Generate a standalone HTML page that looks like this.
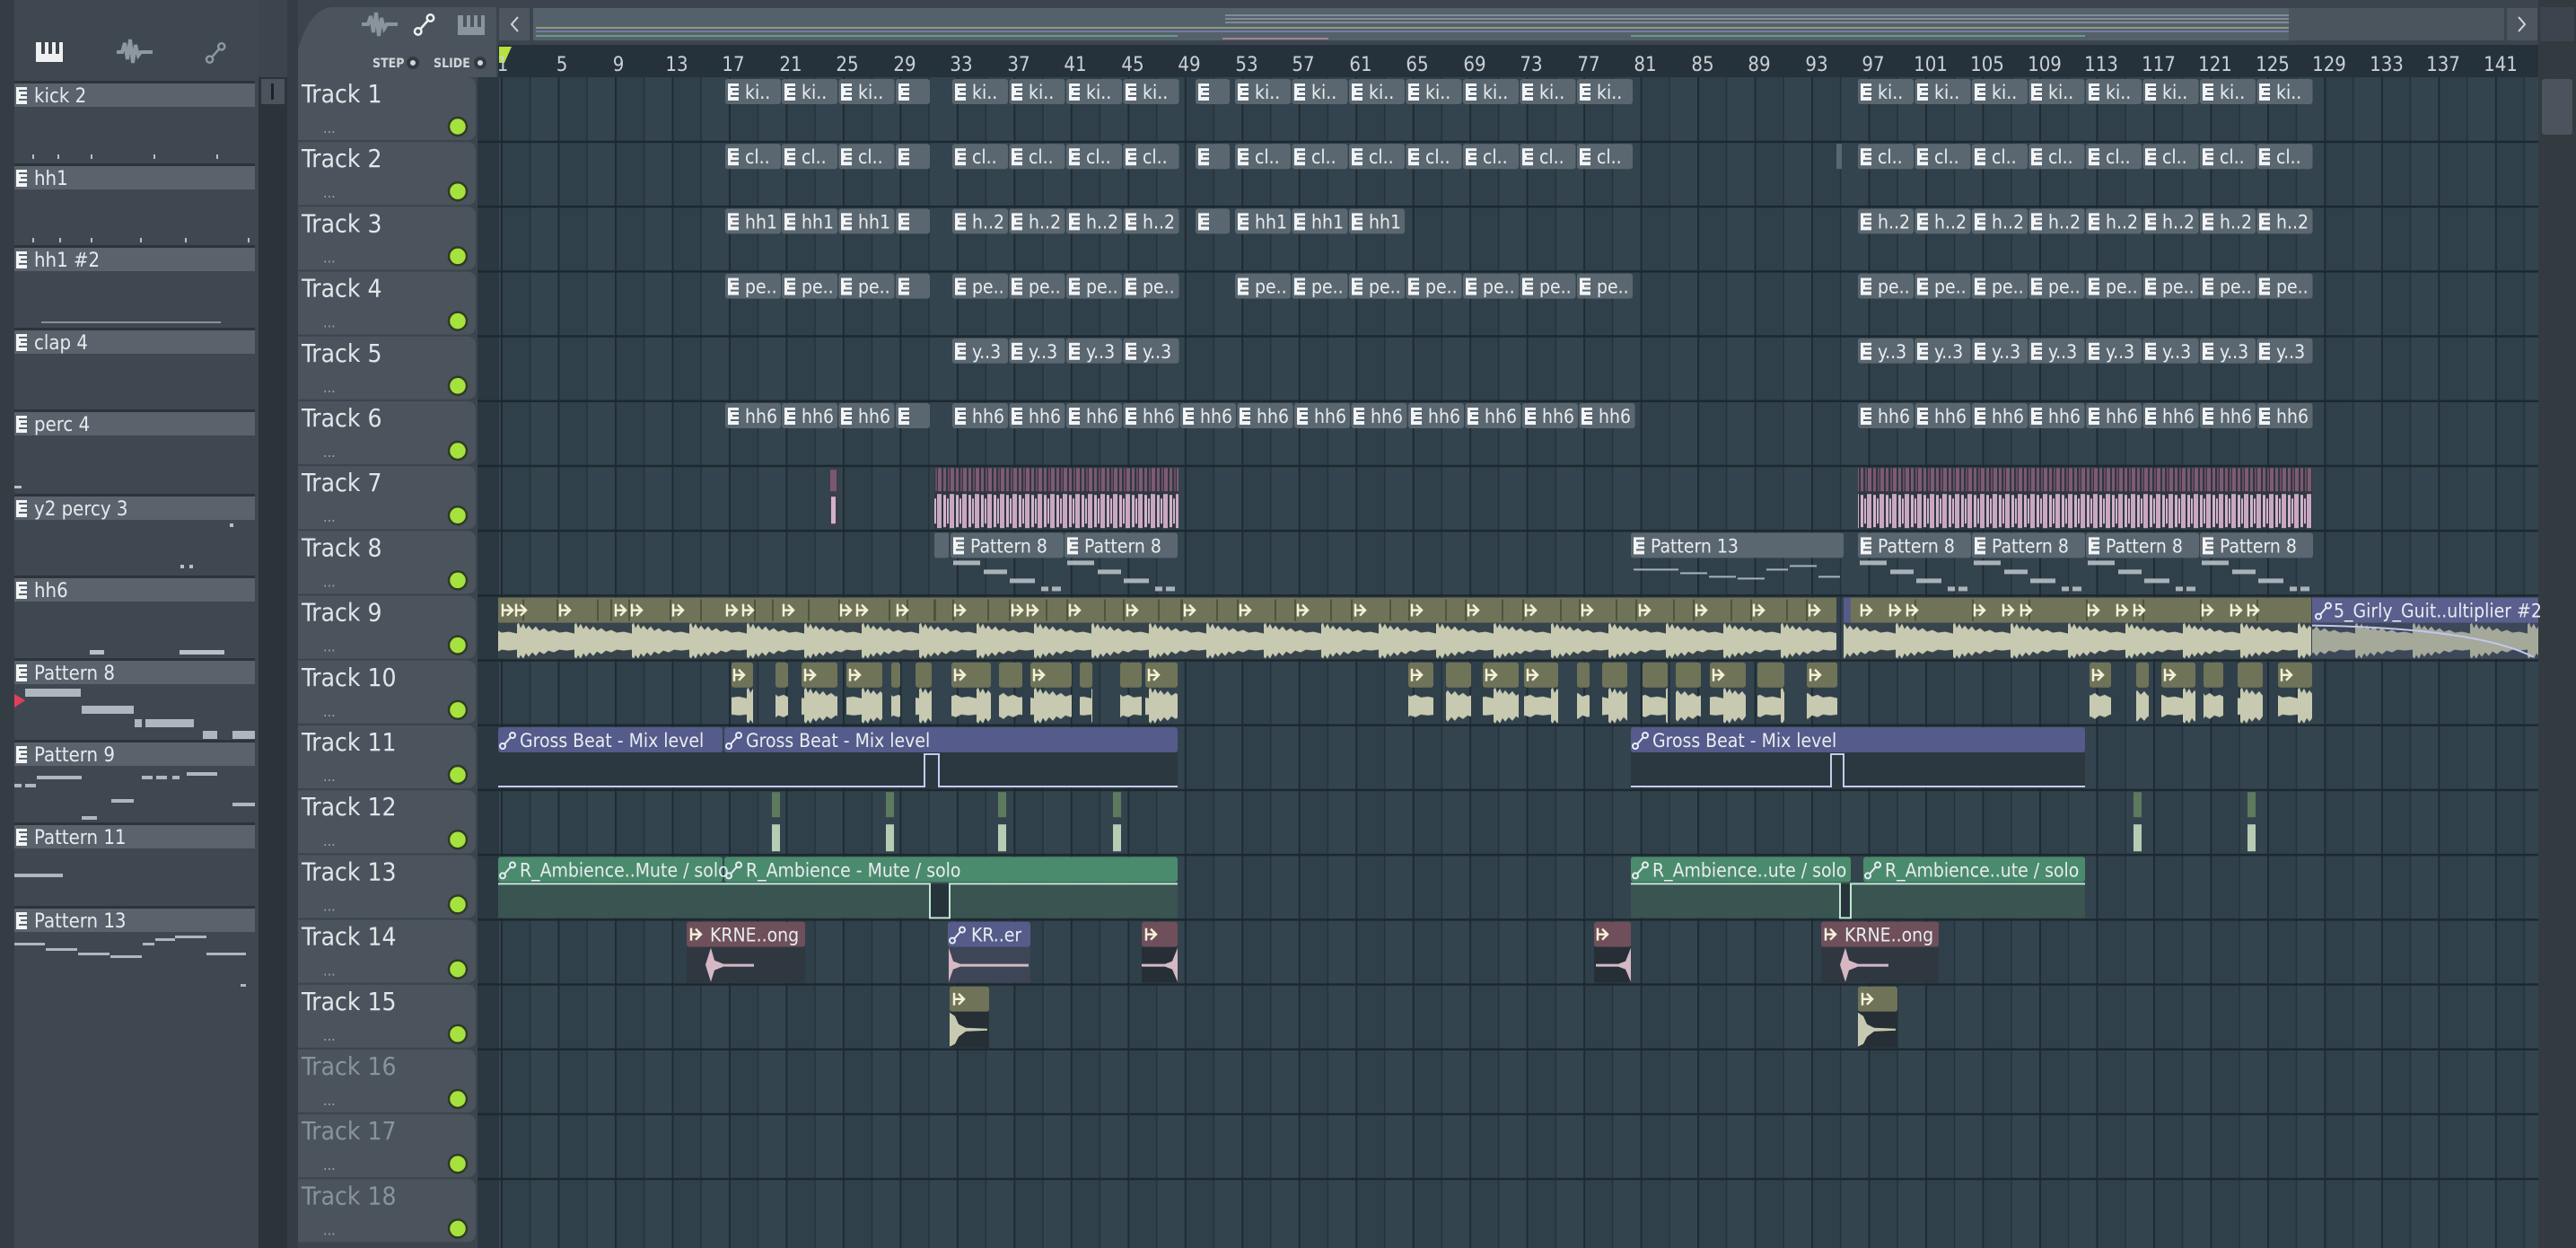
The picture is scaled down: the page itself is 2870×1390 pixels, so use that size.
<!DOCTYPE html>
<html><head><meta charset="utf-8"><style>
html,body{margin:0;padding:0;background:#3c454d;overflow:hidden}
svg{display:block}
text{font-family:"Liberation Sans Narrow","DejaVu Sans Condensed","Liberation Sans",sans-serif}
</style></head><body>
<svg width="2870" height="1390" viewBox="0 0 2870 1390" xmlns="http://www.w3.org/2000/svg">
<defs>
<pattern id="grid" x="558" y="0" width="63.48" height="1390" patternUnits="userSpaceOnUse">
<rect width="31.74" height="1390" fill="#30404a"/><rect x="31.74" width="31.74" height="1390" fill="#34444e"/>
<rect width="2" height="1390" fill="#1f2b33"/><rect x="31.74" width="1.5" height="1390" fill="#243139"/>
</pattern>
<pattern id="wave" x="0" y="30" width="64" height="40" patternUnits="userSpaceOnUse">
<path d="M0,20 L0,2 L2,0 L4,6 L7,1 L10,7 L13,3 L17,8 L21,4 L25,9 L30,6 L35,10 L41,8 L47,11 L55,10 L64,12 L64,30 L55,31 L47,30 L41,33 L35,31 L30,35 L25,32 L21,37 L17,33 L13,38 L10,34 L7,40 L4,36 L2,40 L0,38 Z" fill="#c7cab0"/>
</pattern>
<pattern id="pwave" x="0" y="30" width="14" height="40" patternUnits="userSpaceOnUse">
<rect x="1" y="2" width="3" height="36" fill="#d2b2cb"/><rect x="5" y="6" width="2" height="28" fill="#d2b2cb"/><rect x="8" y="1" width="5" height="38" fill="#c9a7c2"/>
</pattern>
<pattern id="phead" x="0" y="0" width="14" height="30" patternUnits="userSpaceOnUse">
<rect x="1" y="2" width="3" height="26" fill="#7a5870"/><rect x="6" y="2" width="2" height="26" fill="#6a4c62"/><rect x="9" y="2" width="4" height="26" fill="#7e5a74"/>
</pattern>
<g id="pic"><rect width="12" height="19" fill="#f2f4f6"/><rect x="3" y="3" width="9" height="2" fill="#5a656e"/><rect x="5" y="8" width="7" height="2" fill="#5a656e"/><rect x="3" y="13" width="9" height="2" fill="#5a656e"/></g>
<g id="aic"><path d="M0,3 L0,17 M0,10 L11,10 M5,4 L11,10 L5,16" stroke="#f5f0d8" stroke-width="2.5" fill="none"/></g>
<g id="lic"><circle cx="3" cy="16" r="3" fill="none" stroke="#e8ecf6" stroke-width="2"/><circle cx="14" cy="4" r="3" fill="none" stroke="#e8ecf6" stroke-width="2"/><path d="M5,14 L12,6" stroke="#e8ecf6" stroke-width="2"/></g>
</defs>

<rect width="2870" height="1390" fill="#3c454d"/>

<!-- left picker -->
<rect x="0" y="0" width="16" height="1390" fill="#353d44"/>
<rect x="16" y="0" width="272" height="1390" fill="#3f4850"/>
<rect x="288" y="86" width="32" height="1304" fill="#2c343a"/>
<rect x="291" y="88" width="26" height="28" fill="#4b545c"/><rect x="302" y="93" width="3" height="18" fill="#1c2227"/>
<rect x="320" y="0" width="12" height="1390" fill="#353d44"/>
<g transform="translate(40,47)"><rect width="30" height="22" fill="#eef0f2"/><rect x="6" width="4" height="13" fill="#3c454d"/><rect x="14" width="4" height="13" fill="#3c454d"/><rect x="22" width="4" height="13" fill="#3c454d"/></g>
<path d="M130,58 L136,58 L139,48 L142,66 L145,44 L148,70 L151,50 L154,62 L157,58 L170,58" stroke="#8e989f" stroke-width="4" fill="none"/>
<g transform="translate(230,47) scale(1.2)"><circle cx="3" cy="16" r="3" fill="none" stroke="#8e989f" stroke-width="2"/><circle cx="14" cy="4" r="3" fill="none" stroke="#8e989f" stroke-width="2"/><path d="M5,14 L12,6" stroke="#8e989f" stroke-width="2"/></g>
<g font-size="22" fill="#e6eaed">
<g transform="translate(16,93)"><rect width="268" height="26" fill="#5a636b"/><rect x="0" y="-3" width="268" height="3" fill="#2c343a"/><use href="#pic" x="2" y="4"/><text x="22" y="21">kick 2</text><g fill="#b8c0c6"><rect x="20" y="79" width="2" height="5"/><rect x="48" y="79" width="2" height="5"/><rect x="85" y="79" width="2" height="5"/><rect x="155" y="79" width="2" height="5"/><rect x="225" y="79" width="2" height="5"/></g></g>
<g transform="translate(16,185)"><rect width="268" height="26" fill="#5a636b"/><rect x="0" y="-3" width="268" height="3" fill="#2c343a"/><use href="#pic" x="2" y="4"/><text x="22" y="21">hh1</text><g fill="#b8c0c6"><rect x="20" y="80" width="2" height="5"/><rect x="50" y="80" width="2" height="5"/><rect x="85" y="80" width="2" height="5"/><rect x="140" y="80" width="2" height="5"/><rect x="190" y="80" width="2" height="5"/><rect x="260" y="80" width="2" height="5"/></g></g>
<g transform="translate(16,276)"><rect width="268" height="26" fill="#5a636b"/><rect x="0" y="-3" width="268" height="3" fill="#2c343a"/><use href="#pic" x="2" y="4"/><text x="22" y="21">hh1 #2</text><g fill="#b8c0c6"><rect x="30" y="82" width="200" height="2" opacity=".6"/></g></g>
<g transform="translate(16,368)"><rect width="268" height="26" fill="#5a636b"/><rect x="0" y="-3" width="268" height="3" fill="#2c343a"/><use href="#pic" x="2" y="4"/><text x="22" y="21">clap 4</text></g>
<g transform="translate(16,459)"><rect width="268" height="26" fill="#5a636b"/><rect x="0" y="-3" width="268" height="3" fill="#2c343a"/><use href="#pic" x="2" y="4"/><text x="22" y="21">perc 4</text><rect x="0" y="82" width="8" height="3" fill="#b8c0c6"/></g>
<g transform="translate(16,553)"><rect width="268" height="26" fill="#5a636b"/><rect x="0" y="-3" width="268" height="3" fill="#2c343a"/><use href="#pic" x="2" y="4"/><text x="22" y="21">y2 percy 3</text><rect x="240" y="30" width="4" height="4" fill="#b8c0c6"/><rect x="185" y="76" width="4" height="4" fill="#b8c0c6"/><rect x="195" y="76" width="4" height="4" fill="#b8c0c6"/></g>
<g transform="translate(16,644)"><rect width="268" height="26" fill="#5a636b"/><rect x="0" y="-3" width="268" height="3" fill="#2c343a"/><use href="#pic" x="2" y="4"/><text x="22" y="21">hh6</text><g fill="#b8c0c6"><rect x="84" y="80" width="16" height="5"/><rect x="184" y="80" width="50" height="5"/></g></g>
<g transform="translate(16,736)"><rect width="268" height="26" fill="#5a636b"/><rect x="0" y="-3" width="268" height="3" fill="#2c343a"/><use href="#pic" x="2" y="4"/><text x="22" y="21">Pattern 8</text><g fill="#aeb7be"><rect x="12" y="31" width="62" height="9"/><rect x="75" y="50" width="58" height="9"/><rect x="134" y="65" width="8" height="9"/><rect x="146" y="65" width="54" height="9"/><rect x="210" y="78" width="16" height="9"/><rect x="243" y="78" width="25" height="9"/></g><path d="M0,37 L12,44 L0,52 Z" fill="#e0405c"/></g>
<g transform="translate(16,827)"><rect width="268" height="26" fill="#5a636b"/><rect x="0" y="-3" width="268" height="3" fill="#2c343a"/><use href="#pic" x="2" y="4"/><text x="22" y="21">Pattern 9</text><g fill="#aeb7be"><rect x="25" y="37" width="50" height="4"/><rect x="0" y="46" width="8" height="4"/><rect x="12" y="46" width="12" height="4"/><rect x="142" y="37" width="12" height="4"/><rect x="158" y="37" width="12" height="4"/><rect x="176" y="37" width="8" height="4"/><rect x="192" y="33" width="34" height="4"/><rect x="108" y="63" width="25" height="4"/><rect x="243" y="67" width="25" height="4"/><rect x="75" y="82" width="17" height="4"/></g></g>
<g transform="translate(16,919)"><rect width="268" height="26" fill="#5a636b"/><rect x="0" y="-3" width="268" height="3" fill="#2c343a"/><use href="#pic" x="2" y="4"/><text x="22" y="21">Pattern 11</text><rect x="0" y="54" width="54" height="4" fill="#aeb7be"/></g>
<g transform="translate(16,1012)"><rect width="268" height="26" fill="#5a636b"/><rect x="0" y="-3" width="268" height="3" fill="#2c343a"/><use href="#pic" x="2" y="4"/><text x="22" y="21">Pattern 13</text><g fill="#aeb7be"><rect x="0" y="38" width="34" height="3"/><rect x="35" y="44" width="35" height="3"/><rect x="71" y="49" width="35" height="3"/><rect x="107" y="52" width="35" height="3"/><rect x="143" y="38" width="13" height="3"/><rect x="157" y="33" width="22" height="3"/><rect x="179" y="30" width="35" height="3"/><rect x="214" y="49" width="44" height="3"/><rect x="252" y="84" width="6" height="3"/></g></g>
</g>

<!-- header tab -->
<path d="M332,86 L332,55 Q345,10 370,8 L553,8 L553,86 Z" fill="#4b545c"/>
<path d="M403,27 L410,27 L413,18 L416,36 L419,14 L422,40 L425,20 L428,32 L431,27 L443,27" stroke="#8a949b" stroke-width="4" fill="none"/>
<g transform="translate(462,15) scale(1.25)"><circle cx="3" cy="16" r="3" fill="none" stroke="#eef0f2" stroke-width="2"/><circle cx="14" cy="4" r="3" fill="none" stroke="#eef0f2" stroke-width="2"/><path d="M5,14 L12,6" stroke="#eef0f2" stroke-width="2"/></g>
<g transform="translate(510,17)"><rect width="30" height="22" fill="#8a949b"/><rect x="6" width="4" height="13" fill="#4b545c"/><rect x="14" width="4" height="13" fill="#4b545c"/><rect x="22" width="4" height="13" fill="#4b545c"/></g>
<text x="415" y="75" font-size="14" fill="#d0d6da" font-weight="bold">STEP</text>
<circle cx="460" cy="70" r="7" fill="#33393f"/><circle cx="460" cy="70" r="3" fill="#d0d6da"/>
<text x="483" y="75" font-size="14" fill="#d0d6da" font-weight="bold">SLIDE</text>
<circle cx="535" cy="70" r="7" fill="#33393f"/><circle cx="535" cy="70" r="3" fill="#d0d6da"/>

<!-- overview -->
<rect x="553" y="8" width="2317" height="42" fill="#3c454d"/>
<rect x="556" y="9" width="34" height="36" fill="#4d565e"/><path d="M577,19 L570,27 L577,35" stroke="#d0d6da" stroke-width="2" fill="none"/>
<rect x="594" y="9" width="1956" height="36" fill="#55616a"/>
<g stroke-width="1.5"><path d="M1365,17 H2550 M1365,21 H2550 M1365,25 H2550" stroke="#8e99a1"/><path d="M597,31 H2550" stroke="#a7aa82"/><path d="M597,35 H2550" stroke="#7d82c0"/><path d="M597,40 H1312 M1817,40 H2323" stroke="#6fb08e"/><path d="M1362,43 H1480" stroke="#c0889c"/></g>
<rect x="2550" y="9" width="240" height="36" fill="#4a555d"/>
<rect x="2793" y="9" width="34" height="36" fill="#4d565e"/><path d="M2806,19 L2813,27 L2806,35" stroke="#d0d6da" stroke-width="2" fill="none"/>

<!-- ruler -->
<rect x="555" y="50" width="2273" height="36" fill="#26323b"/>
<path d="M556,52 L570,52 L562,70 L556,70 Z" fill="#b6e23c"/>
<g font-size="22" fill="#c9d0d5" text-anchor="middle">
<text x="560" y="79">1</text><text x="626" y="79">5</text><text x="689" y="79">9</text><text x="754" y="79">13</text><text x="817" y="79">17</text><text x="881" y="79">21</text><text x="944" y="79">25</text><text x="1008" y="79">29</text><text x="1071" y="79">33</text><text x="1135" y="79">37</text><text x="1198" y="79">41</text><text x="1262" y="79">45</text><text x="1325" y="79">49</text><text x="1389" y="79">53</text><text x="1452" y="79">57</text><text x="1516" y="79">61</text><text x="1579" y="79">65</text><text x="1643" y="79">69</text><text x="1706" y="79">73</text><text x="1770" y="79">77</text><text x="1833" y="79">81</text><text x="1897" y="79">85</text><text x="1960" y="79">89</text><text x="2024" y="79">93</text><text x="2087" y="79">97</text><text x="2151" y="79">101</text><text x="2214" y="79">105</text><text x="2278" y="79">109</text><text x="2341" y="79">113</text><text x="2405" y="79">117</text><text x="2468" y="79">121</text><text x="2532" y="79">125</text><text x="2595" y="79">129</text><text x="2659" y="79">133</text><text x="2722" y="79">137</text><text x="2786" y="79">141</text>
</g>

<!-- grid -->
<rect x="532" y="86" width="2296" height="1304" fill="url(#grid)"/>
<rect x="532" y="86" width="24" height="1304" fill="#2b3841"/>
<g fill="#1d282f">
<rect x="532" y="156.7" width="2296" height="2.5"/><rect x="532" y="228.9" width="2296" height="2.5"/><rect x="532" y="301.1" width="2296" height="2.5"/><rect x="532" y="373.3" width="2296" height="2.5"/><rect x="532" y="445.5" width="2296" height="2.5"/><rect x="532" y="517.7" width="2296" height="2.5"/><rect x="532" y="589.9" width="2296" height="2.5"/><rect x="532" y="662.1" width="2296" height="2.5"/><rect x="532" y="734.3" width="2296" height="2.5"/><rect x="532" y="806.5" width="2296" height="2.5"/><rect x="532" y="878.7" width="2296" height="2.5"/><rect x="532" y="950.9" width="2296" height="2.5"/><rect x="532" y="1023.1" width="2296" height="2.5"/><rect x="532" y="1095.3" width="2296" height="2.5"/><rect x="532" y="1167.5" width="2296" height="2.5"/><rect x="532" y="1239.7" width="2296" height="2.5"/><rect x="532" y="1311.9" width="2296" height="2.5"/>
</g>

<rect x="2828" y="0" width="42" height="1390" fill="#333b41"/>
<rect x="2832" y="88" width="34" height="62" rx="3" fill="#4b545c"/>
<rect x="2830" y="8" width="38" height="38" fill="#3c454d"/>

<!-- track headers -->
<g font-size="28" fill="#e2e6e9">
<g transform="translate(332,86)"><path d="M0,0 H188 Q198,0 198,10 V60 Q198,70 188,70 H0 Z" fill="#4b545c"/><text x="4" y="28">Track 1</text><text x="28" y="62" font-size="16" fill="#9aa3a9">...</text><circle cx="178" cy="55" r="10" fill="#a6e23e" stroke="#2f3a26" stroke-width="2.5"/></g>
<g transform="translate(332,158.2)"><path d="M0,0 H188 Q198,0 198,10 V60 Q198,70 188,70 H0 Z" fill="#4b545c"/><text x="4" y="28">Track 2</text><text x="28" y="62" font-size="16" fill="#9aa3a9">...</text><circle cx="178" cy="55" r="10" fill="#a6e23e" stroke="#2f3a26" stroke-width="2.5"/></g>
<g transform="translate(332,230.4)"><path d="M0,0 H188 Q198,0 198,10 V60 Q198,70 188,70 H0 Z" fill="#4b545c"/><text x="4" y="28">Track 3</text><text x="28" y="62" font-size="16" fill="#9aa3a9">...</text><circle cx="178" cy="55" r="10" fill="#a6e23e" stroke="#2f3a26" stroke-width="2.5"/></g>
<g transform="translate(332,302.6)"><path d="M0,0 H188 Q198,0 198,10 V60 Q198,70 188,70 H0 Z" fill="#4b545c"/><text x="4" y="28">Track 4</text><text x="28" y="62" font-size="16" fill="#9aa3a9">...</text><circle cx="178" cy="55" r="10" fill="#a6e23e" stroke="#2f3a26" stroke-width="2.5"/></g>
<g transform="translate(332,374.8)"><path d="M0,0 H188 Q198,0 198,10 V60 Q198,70 188,70 H0 Z" fill="#4b545c"/><text x="4" y="28">Track 5</text><text x="28" y="62" font-size="16" fill="#9aa3a9">...</text><circle cx="178" cy="55" r="10" fill="#a6e23e" stroke="#2f3a26" stroke-width="2.5"/></g>
<g transform="translate(332,447)"><path d="M0,0 H188 Q198,0 198,10 V60 Q198,70 188,70 H0 Z" fill="#4b545c"/><text x="4" y="28">Track 6</text><text x="28" y="62" font-size="16" fill="#9aa3a9">...</text><circle cx="178" cy="55" r="10" fill="#a6e23e" stroke="#2f3a26" stroke-width="2.5"/></g>
<g transform="translate(332,519.2)"><path d="M0,0 H188 Q198,0 198,10 V60 Q198,70 188,70 H0 Z" fill="#4b545c"/><text x="4" y="28">Track 7</text><text x="28" y="62" font-size="16" fill="#9aa3a9">...</text><circle cx="178" cy="55" r="10" fill="#a6e23e" stroke="#2f3a26" stroke-width="2.5"/></g>
<g transform="translate(332,591.4)"><path d="M0,0 H188 Q198,0 198,10 V60 Q198,70 188,70 H0 Z" fill="#4b545c"/><text x="4" y="28">Track 8</text><text x="28" y="62" font-size="16" fill="#9aa3a9">...</text><circle cx="178" cy="55" r="10" fill="#a6e23e" stroke="#2f3a26" stroke-width="2.5"/></g>
<g transform="translate(332,663.6)"><path d="M0,0 H188 Q198,0 198,10 V60 Q198,70 188,70 H0 Z" fill="#4b545c"/><text x="4" y="28">Track 9</text><text x="28" y="62" font-size="16" fill="#9aa3a9">...</text><circle cx="178" cy="55" r="10" fill="#a6e23e" stroke="#2f3a26" stroke-width="2.5"/></g>
<g transform="translate(332,735.8)"><path d="M0,0 H188 Q198,0 198,10 V60 Q198,70 188,70 H0 Z" fill="#4b545c"/><text x="4" y="28">Track 10</text><text x="28" y="62" font-size="16" fill="#9aa3a9">...</text><circle cx="178" cy="55" r="10" fill="#a6e23e" stroke="#2f3a26" stroke-width="2.5"/></g>
<g transform="translate(332,808)"><path d="M0,0 H188 Q198,0 198,10 V60 Q198,70 188,70 H0 Z" fill="#4b545c"/><text x="4" y="28">Track 11</text><text x="28" y="62" font-size="16" fill="#9aa3a9">...</text><circle cx="178" cy="55" r="10" fill="#a6e23e" stroke="#2f3a26" stroke-width="2.5"/></g>
<g transform="translate(332,880.2)"><path d="M0,0 H188 Q198,0 198,10 V60 Q198,70 188,70 H0 Z" fill="#4b545c"/><text x="4" y="28">Track 12</text><text x="28" y="62" font-size="16" fill="#9aa3a9">...</text><circle cx="178" cy="55" r="10" fill="#a6e23e" stroke="#2f3a26" stroke-width="2.5"/></g>
<g transform="translate(332,952.4)"><path d="M0,0 H188 Q198,0 198,10 V60 Q198,70 188,70 H0 Z" fill="#4b545c"/><text x="4" y="28">Track 13</text><text x="28" y="62" font-size="16" fill="#9aa3a9">...</text><circle cx="178" cy="55" r="10" fill="#a6e23e" stroke="#2f3a26" stroke-width="2.5"/></g>
<g transform="translate(332,1024.6)"><path d="M0,0 H188 Q198,0 198,10 V60 Q198,70 188,70 H0 Z" fill="#4b545c"/><text x="4" y="28">Track 14</text><text x="28" y="62" font-size="16" fill="#9aa3a9">...</text><circle cx="178" cy="55" r="10" fill="#a6e23e" stroke="#2f3a26" stroke-width="2.5"/></g>
<g transform="translate(332,1096.8)"><path d="M0,0 H188 Q198,0 198,10 V60 Q198,70 188,70 H0 Z" fill="#4b545c"/><text x="4" y="28">Track 15</text><text x="28" y="62" font-size="16" fill="#9aa3a9">...</text><circle cx="178" cy="55" r="10" fill="#a6e23e" stroke="#2f3a26" stroke-width="2.5"/></g>
<g transform="translate(332,1169)"><path d="M0,0 H188 Q198,0 198,10 V60 Q198,70 188,70 H0 Z" fill="#4b545c"/><text x="4" y="28" fill="#89939a">Track 16</text><text x="28" y="62" font-size="16" fill="#9aa3a9">...</text><circle cx="178" cy="55" r="10" fill="#a6e23e" stroke="#2f3a26" stroke-width="2.5"/></g>
<g transform="translate(332,1241.2)"><path d="M0,0 H188 Q198,0 198,10 V60 Q198,70 188,70 H0 Z" fill="#4b545c"/><text x="4" y="28" fill="#89939a">Track 17</text><text x="28" y="62" font-size="16" fill="#9aa3a9">...</text><circle cx="178" cy="55" r="10" fill="#a6e23e" stroke="#2f3a26" stroke-width="2.5"/></g>
<g transform="translate(332,1313.4)"><path d="M0,0 H188 Q198,0 198,10 V60 Q198,70 188,70 H0 Z" fill="#4b545c"/><text x="4" y="28" fill="#89939a">Track 18</text><text x="28" y="62" font-size="16" fill="#9aa3a9">...</text><circle cx="178" cy="55" r="10" fill="#a6e23e" stroke="#2f3a26" stroke-width="2.5"/></g>
</g>

<!-- ===== CLIPS ===== -->
<g font-size="21" fill="#e8ecef">
<g transform="translate(0,86)">
<g fill="#5b6770"><rect x="808" y="2" width="62" height="28" rx="3"/><rect x="871" y="2" width="62" height="28" rx="3"/><rect x="934.5" y="2" width="62" height="28" rx="3"/><rect x="998" y="2" width="38" height="28" rx="3"/><rect x="1061" y="2" width="62" height="28" rx="3"/><rect x="1124.5" y="2" width="62" height="28" rx="3"/><rect x="1188" y="2" width="62" height="28" rx="3"/><rect x="1251.5" y="2" width="62" height="28" rx="3"/><rect x="1332" y="2" width="38" height="28" rx="3"/><rect x="1376" y="2" width="62" height="28" rx="3"/><rect x="1439.5" y="2" width="62" height="28" rx="3"/><rect x="1503" y="2" width="62" height="28" rx="3"/><rect x="1566.5" y="2" width="62" height="28" rx="3"/><rect x="1630" y="2" width="62" height="28" rx="3"/><rect x="1693.5" y="2" width="62" height="28" rx="3"/><rect x="1757" y="2" width="62" height="28" rx="3"/><rect x="2070" y="2" width="62" height="28" rx="3"/><rect x="2133.5" y="2" width="62" height="28" rx="3"/><rect x="2197" y="2" width="62" height="28" rx="3"/><rect x="2260.5" y="2" width="62" height="28" rx="3"/><rect x="2324" y="2" width="62" height="28" rx="3"/><rect x="2387.5" y="2" width="62" height="28" rx="3"/><rect x="2451" y="2" width="62" height="28" rx="3"/><rect x="2514.5" y="2" width="62" height="28" rx="3"/></g>
<use href="#pic" x="811" y="7"/><text x="830" y="24">ki..</text><use href="#pic" x="874" y="7"/><text x="893" y="24">ki..</text><use href="#pic" x="937" y="7"/><text x="956" y="24">ki..</text><use href="#pic" x="1001" y="7"/>
<use href="#pic" x="1064" y="7"/><text x="1083" y="24">ki..</text><use href="#pic" x="1127" y="7"/><text x="1146" y="24">ki..</text><use href="#pic" x="1191" y="7"/><text x="1210" y="24">ki..</text><use href="#pic" x="1254" y="7"/><text x="1273" y="24">ki..</text>
<use href="#pic" x="1335" y="7"/><use href="#pic" x="1379" y="7"/><text x="1398" y="24">ki..</text><use href="#pic" x="1442" y="7"/><text x="1461" y="24">ki..</text><use href="#pic" x="1506" y="7"/><text x="1525" y="24">ki..</text><use href="#pic" x="1569" y="7"/><text x="1588" y="24">ki..</text><use href="#pic" x="1633" y="7"/><text x="1652" y="24">ki..</text><use href="#pic" x="1696" y="7"/><text x="1715" y="24">ki..</text><use href="#pic" x="1760" y="7"/><text x="1779" y="24">ki..</text>
<use href="#pic" x="2073" y="7"/><text x="2092" y="24">ki..</text><use href="#pic" x="2136" y="7"/><text x="2155" y="24">ki..</text><use href="#pic" x="2200" y="7"/><text x="2219" y="24">ki..</text><use href="#pic" x="2263" y="7"/><text x="2282" y="24">ki..</text><use href="#pic" x="2327" y="7"/><text x="2346" y="24">ki..</text><use href="#pic" x="2390" y="7"/><text x="2409" y="24">ki..</text><use href="#pic" x="2454" y="7"/><text x="2473" y="24">ki..</text><use href="#pic" x="2517" y="7"/><text x="2536" y="24">ki..</text>
</g>
<g transform="translate(0,158.2)">
<g fill="#5b6770"><rect x="808" y="2" width="62" height="28" rx="3"/><rect x="871" y="2" width="62" height="28" rx="3"/><rect x="934.5" y="2" width="62" height="28" rx="3"/><rect x="998" y="2" width="38" height="28" rx="3"/><rect x="1061" y="2" width="62" height="28" rx="3"/><rect x="1124.5" y="2" width="62" height="28" rx="3"/><rect x="1188" y="2" width="62" height="28" rx="3"/><rect x="1251.5" y="2" width="62" height="28" rx="3"/><rect x="1332" y="2" width="38" height="28" rx="3"/><rect x="1376" y="2" width="62" height="28" rx="3"/><rect x="1439.5" y="2" width="62" height="28" rx="3"/><rect x="1503" y="2" width="62" height="28" rx="3"/><rect x="1566.5" y="2" width="62" height="28" rx="3"/><rect x="1630" y="2" width="62" height="28" rx="3"/><rect x="1693.5" y="2" width="62" height="28" rx="3"/><rect x="1757" y="2" width="62" height="28" rx="3"/><rect x="2046" y="2" width="6" height="28"/><rect x="2070" y="2" width="62" height="28" rx="3"/><rect x="2133.5" y="2" width="62" height="28" rx="3"/><rect x="2197" y="2" width="62" height="28" rx="3"/><rect x="2260.5" y="2" width="62" height="28" rx="3"/><rect x="2324" y="2" width="62" height="28" rx="3"/><rect x="2387.5" y="2" width="62" height="28" rx="3"/><rect x="2451" y="2" width="62" height="28" rx="3"/><rect x="2514.5" y="2" width="62" height="28" rx="3"/></g>
<use href="#pic" x="811" y="7"/><text x="830" y="24">cl..</text><use href="#pic" x="874" y="7"/><text x="893" y="24">cl..</text><use href="#pic" x="937" y="7"/><text x="956" y="24">cl..</text><use href="#pic" x="1001" y="7"/>
<use href="#pic" x="1064" y="7"/><text x="1083" y="24">cl..</text><use href="#pic" x="1127" y="7"/><text x="1146" y="24">cl..</text><use href="#pic" x="1191" y="7"/><text x="1210" y="24">cl..</text><use href="#pic" x="1254" y="7"/><text x="1273" y="24">cl..</text>
<use href="#pic" x="1335" y="7"/><use href="#pic" x="1379" y="7"/><text x="1398" y="24">cl..</text><use href="#pic" x="1442" y="7"/><text x="1461" y="24">cl..</text><use href="#pic" x="1506" y="7"/><text x="1525" y="24">cl..</text><use href="#pic" x="1569" y="7"/><text x="1588" y="24">cl..</text><use href="#pic" x="1633" y="7"/><text x="1652" y="24">cl..</text><use href="#pic" x="1696" y="7"/><text x="1715" y="24">cl..</text><use href="#pic" x="1760" y="7"/><text x="1779" y="24">cl..</text>
<use href="#pic" x="2073" y="7"/><text x="2092" y="24">cl..</text><use href="#pic" x="2136" y="7"/><text x="2155" y="24">cl..</text><use href="#pic" x="2200" y="7"/><text x="2219" y="24">cl..</text><use href="#pic" x="2263" y="7"/><text x="2282" y="24">cl..</text><use href="#pic" x="2327" y="7"/><text x="2346" y="24">cl..</text><use href="#pic" x="2390" y="7"/><text x="2409" y="24">cl..</text><use href="#pic" x="2454" y="7"/><text x="2473" y="24">cl..</text><use href="#pic" x="2517" y="7"/><text x="2536" y="24">cl..</text>
</g>
<g transform="translate(0,230.4)">
<g fill="#5b6770"><rect x="808" y="2" width="62" height="28" rx="3"/><rect x="871" y="2" width="62" height="28" rx="3"/><rect x="934.5" y="2" width="62" height="28" rx="3"/><rect x="998" y="2" width="38" height="28" rx="3"/><rect x="1061" y="2" width="62" height="28" rx="3"/><rect x="1124.5" y="2" width="62" height="28" rx="3"/><rect x="1188" y="2" width="62" height="28" rx="3"/><rect x="1251.5" y="2" width="62" height="28" rx="3"/><rect x="1332" y="2" width="38" height="28" rx="3"/><rect x="1376" y="2" width="62" height="28" rx="3"/><rect x="1439.5" y="2" width="62" height="28" rx="3"/><rect x="1503" y="2" width="62" height="28" rx="3"/><rect x="2070" y="2" width="62" height="28" rx="3"/><rect x="2133.5" y="2" width="62" height="28" rx="3"/><rect x="2197" y="2" width="62" height="28" rx="3"/><rect x="2260.5" y="2" width="62" height="28" rx="3"/><rect x="2324" y="2" width="62" height="28" rx="3"/><rect x="2387.5" y="2" width="62" height="28" rx="3"/><rect x="2451" y="2" width="62" height="28" rx="3"/><rect x="2514.5" y="2" width="62" height="28" rx="3"/></g>
<use href="#pic" x="811" y="7"/><text x="830" y="24">hh1</text><use href="#pic" x="874" y="7"/><text x="893" y="24">hh1</text><use href="#pic" x="937" y="7"/><text x="956" y="24">hh1</text><use href="#pic" x="1001" y="7"/>
<use href="#pic" x="1064" y="7"/><text x="1083" y="24">h..2</text><use href="#pic" x="1127" y="7"/><text x="1146" y="24">h..2</text><use href="#pic" x="1191" y="7"/><text x="1210" y="24">h..2</text><use href="#pic" x="1254" y="7"/><text x="1273" y="24">h..2</text>
<use href="#pic" x="1335" y="7"/><use href="#pic" x="1379" y="7"/><text x="1398" y="24">hh1</text><use href="#pic" x="1442" y="7"/><text x="1461" y="24">hh1</text><use href="#pic" x="1506" y="7"/><text x="1525" y="24">hh1</text>
<use href="#pic" x="2073" y="7"/><text x="2092" y="24">h..2</text><use href="#pic" x="2136" y="7"/><text x="2155" y="24">h..2</text><use href="#pic" x="2200" y="7"/><text x="2219" y="24">h..2</text><use href="#pic" x="2263" y="7"/><text x="2282" y="24">h..2</text><use href="#pic" x="2327" y="7"/><text x="2346" y="24">h..2</text><use href="#pic" x="2390" y="7"/><text x="2409" y="24">h..2</text><use href="#pic" x="2454" y="7"/><text x="2473" y="24">h..2</text><use href="#pic" x="2517" y="7"/><text x="2536" y="24">h..2</text>
</g>
<g transform="translate(0,302.6)">
<g fill="#5b6770"><rect x="808" y="2" width="62" height="28" rx="3"/><rect x="871" y="2" width="62" height="28" rx="3"/><rect x="934.5" y="2" width="62" height="28" rx="3"/><rect x="998" y="2" width="38" height="28" rx="3"/><rect x="1061" y="2" width="62" height="28" rx="3"/><rect x="1124.5" y="2" width="62" height="28" rx="3"/><rect x="1188" y="2" width="62" height="28" rx="3"/><rect x="1251.5" y="2" width="62" height="28" rx="3"/><rect x="1376" y="2" width="62" height="28" rx="3"/><rect x="1439.5" y="2" width="62" height="28" rx="3"/><rect x="1503" y="2" width="62" height="28" rx="3"/><rect x="1566.5" y="2" width="62" height="28" rx="3"/><rect x="1630" y="2" width="62" height="28" rx="3"/><rect x="1693.5" y="2" width="62" height="28" rx="3"/><rect x="1757" y="2" width="62" height="28" rx="3"/><rect x="2070" y="2" width="62" height="28" rx="3"/><rect x="2133.5" y="2" width="62" height="28" rx="3"/><rect x="2197" y="2" width="62" height="28" rx="3"/><rect x="2260.5" y="2" width="62" height="28" rx="3"/><rect x="2324" y="2" width="62" height="28" rx="3"/><rect x="2387.5" y="2" width="62" height="28" rx="3"/><rect x="2451" y="2" width="62" height="28" rx="3"/><rect x="2514.5" y="2" width="62" height="28" rx="3"/></g>
<use href="#pic" x="811" y="7"/><text x="830" y="24">pe..</text><use href="#pic" x="874" y="7"/><text x="893" y="24">pe..</text><use href="#pic" x="937" y="7"/><text x="956" y="24">pe..</text><use href="#pic" x="1001" y="7"/>
<use href="#pic" x="1064" y="7"/><text x="1083" y="24">pe..</text><use href="#pic" x="1127" y="7"/><text x="1146" y="24">pe..</text><use href="#pic" x="1191" y="7"/><text x="1210" y="24">pe..</text><use href="#pic" x="1254" y="7"/><text x="1273" y="24">pe..</text>
<use href="#pic" x="1379" y="7"/><text x="1398" y="24">pe..</text><use href="#pic" x="1442" y="7"/><text x="1461" y="24">pe..</text><use href="#pic" x="1506" y="7"/><text x="1525" y="24">pe..</text><use href="#pic" x="1569" y="7"/><text x="1588" y="24">pe..</text><use href="#pic" x="1633" y="7"/><text x="1652" y="24">pe..</text><use href="#pic" x="1696" y="7"/><text x="1715" y="24">pe..</text><use href="#pic" x="1760" y="7"/><text x="1779" y="24">pe..</text>
<use href="#pic" x="2073" y="7"/><text x="2092" y="24">pe..</text><use href="#pic" x="2136" y="7"/><text x="2155" y="24">pe..</text><use href="#pic" x="2200" y="7"/><text x="2219" y="24">pe..</text><use href="#pic" x="2263" y="7"/><text x="2282" y="24">pe..</text><use href="#pic" x="2327" y="7"/><text x="2346" y="24">pe..</text><use href="#pic" x="2390" y="7"/><text x="2409" y="24">pe..</text><use href="#pic" x="2454" y="7"/><text x="2473" y="24">pe..</text><use href="#pic" x="2517" y="7"/><text x="2536" y="24">pe..</text>
</g>
<g transform="translate(0,374.8)">
<g fill="#5b6770"><rect x="1061" y="2" width="62" height="28" rx="3"/><rect x="1124.5" y="2" width="62" height="28" rx="3"/><rect x="1188" y="2" width="62" height="28" rx="3"/><rect x="1251.5" y="2" width="62" height="28" rx="3"/><rect x="2070" y="2" width="62" height="28" rx="3"/><rect x="2133.5" y="2" width="62" height="28" rx="3"/><rect x="2197" y="2" width="62" height="28" rx="3"/><rect x="2260.5" y="2" width="62" height="28" rx="3"/><rect x="2324" y="2" width="62" height="28" rx="3"/><rect x="2387.5" y="2" width="62" height="28" rx="3"/><rect x="2451" y="2" width="62" height="28" rx="3"/><rect x="2514.5" y="2" width="62" height="28" rx="3"/></g>
<use href="#pic" x="1064" y="7"/><text x="1083" y="24">y..3</text><use href="#pic" x="1127" y="7"/><text x="1146" y="24">y..3</text><use href="#pic" x="1191" y="7"/><text x="1210" y="24">y..3</text><use href="#pic" x="1254" y="7"/><text x="1273" y="24">y..3</text>
<use href="#pic" x="2073" y="7"/><text x="2092" y="24">y..3</text><use href="#pic" x="2136" y="7"/><text x="2155" y="24">y..3</text><use href="#pic" x="2200" y="7"/><text x="2219" y="24">y..3</text><use href="#pic" x="2263" y="7"/><text x="2282" y="24">y..3</text><use href="#pic" x="2327" y="7"/><text x="2346" y="24">y..3</text><use href="#pic" x="2390" y="7"/><text x="2409" y="24">y..3</text><use href="#pic" x="2454" y="7"/><text x="2473" y="24">y..3</text><use href="#pic" x="2517" y="7"/><text x="2536" y="24">y..3</text>
</g>
<g transform="translate(0,447)">
<g fill="#5b6770"><rect x="808" y="2" width="62" height="28" rx="3"/><rect x="871" y="2" width="62" height="28" rx="3"/><rect x="934.5" y="2" width="62" height="28" rx="3"/><rect x="998" y="2" width="38" height="28" rx="3"/><rect x="1061" y="2" width="62" height="28" rx="3"/><rect x="1124.5" y="2" width="62" height="28" rx="3"/><rect x="1188" y="2" width="62" height="28" rx="3"/><rect x="1251.5" y="2" width="62" height="28" rx="3"/><rect x="1315" y="2" width="62" height="28" rx="3"/><rect x="1378.5" y="2" width="62" height="28" rx="3"/><rect x="1442" y="2" width="62" height="28" rx="3"/><rect x="1505.5" y="2" width="62" height="28" rx="3"/><rect x="1569" y="2" width="62" height="28" rx="3"/><rect x="1632.5" y="2" width="62" height="28" rx="3"/><rect x="1696" y="2" width="62" height="28" rx="3"/><rect x="1759.5" y="2" width="62" height="28" rx="3"/><rect x="2070" y="2" width="62" height="28" rx="3"/><rect x="2133.5" y="2" width="62" height="28" rx="3"/><rect x="2197" y="2" width="62" height="28" rx="3"/><rect x="2260.5" y="2" width="62" height="28" rx="3"/><rect x="2324" y="2" width="62" height="28" rx="3"/><rect x="2387.5" y="2" width="62" height="28" rx="3"/><rect x="2451" y="2" width="62" height="28" rx="3"/><rect x="2514.5" y="2" width="62" height="28" rx="3"/></g>
<use href="#pic" x="811" y="7"/><text x="830" y="24">hh6</text><use href="#pic" x="874" y="7"/><text x="893" y="24">hh6</text><use href="#pic" x="937" y="7"/><text x="956" y="24">hh6</text><use href="#pic" x="1001" y="7"/>
<use href="#pic" x="1064" y="7"/><text x="1083" y="24">hh6</text><use href="#pic" x="1127" y="7"/><text x="1146" y="24">hh6</text><use href="#pic" x="1191" y="7"/><text x="1210" y="24">hh6</text><use href="#pic" x="1254" y="7"/><text x="1273" y="24">hh6</text><use href="#pic" x="1318" y="7"/><text x="1337" y="24">hh6</text><use href="#pic" x="1381" y="7"/><text x="1400" y="24">hh6</text><use href="#pic" x="1445" y="7"/><text x="1464" y="24">hh6</text><use href="#pic" x="1508" y="7"/><text x="1527" y="24">hh6</text><use href="#pic" x="1572" y="7"/><text x="1591" y="24">hh6</text><use href="#pic" x="1635" y="7"/><text x="1654" y="24">hh6</text><use href="#pic" x="1699" y="7"/><text x="1718" y="24">hh6</text><use href="#pic" x="1762" y="7"/><text x="1781" y="24">hh6</text>
<use href="#pic" x="2073" y="7"/><text x="2092" y="24">hh6</text><use href="#pic" x="2136" y="7"/><text x="2155" y="24">hh6</text><use href="#pic" x="2200" y="7"/><text x="2219" y="24">hh6</text><use href="#pic" x="2263" y="7"/><text x="2282" y="24">hh6</text><use href="#pic" x="2327" y="7"/><text x="2346" y="24">hh6</text><use href="#pic" x="2390" y="7"/><text x="2409" y="24">hh6</text><use href="#pic" x="2454" y="7"/><text x="2473" y="24">hh6</text><use href="#pic" x="2517" y="7"/><text x="2536" y="24">hh6</text>
</g>
<g transform="translate(0,519.2)">
<rect x="924" y="2" width="10" height="66" fill="#3a3f4a"/><rect x="925" y="4" width="7" height="24" fill="#7a5870"/><rect x="926" y="34" width="5" height="30" fill="#d2b2cb"/>
<rect x="1041" y="2" width="272" height="68" fill="#2f3840"/><rect x="1041" y="2" width="272" height="28" fill="url(#phead)"/><rect x="1041" y="30" width="272" height="40" fill="url(#pwave)"/>
<rect x="2070" y="2" width="506" height="68" fill="#2f3840"/><rect x="2070" y="2" width="506" height="28" fill="url(#phead)"/><rect x="2070" y="30" width="506" height="40" fill="url(#pwave)"/>
</g>
<g transform="translate(0,591.4)">
<g fill="#5b6770"><rect x="1041" y="2" width="16" height="28" rx="2"/><rect x="1059" y="2" width="126" height="28" rx="3"/><rect x="1186" y="2" width="126" height="28" rx="3"/><rect x="1817" y="2" width="237" height="28" rx="3"/><rect x="2070" y="2" width="126" height="28" rx="3"/><rect x="2197" y="2" width="126" height="28" rx="3"/><rect x="2324" y="2" width="126" height="28" rx="3"/><rect x="2451" y="2" width="126" height="28" rx="3"/></g>
<use href="#pic" x="1062" y="7"/><text x="1081" y="24">Pattern 8</text><use href="#pic" x="1189" y="7"/><text x="1208" y="24">Pattern 8</text><use href="#pic" x="1820" y="7"/><text x="1839" y="24">Pattern 13</text><use href="#pic" x="2073" y="7"/><text x="2092" y="24">Pattern 8</text><use href="#pic" x="2200" y="7"/><text x="2219" y="24">Pattern 8</text><use href="#pic" x="2327" y="7"/><text x="2346" y="24">Pattern 8</text><use href="#pic" x="2454" y="7"/><text x="2473" y="24">Pattern 8</text>
<g fill="#a9b2b9">
<rect x="1062" y="33" width="30" height="5"/><rect x="1096" y="43" width="26" height="5"/><rect x="1125" y="53" width="28" height="5"/><rect x="1160" y="62" width="8" height="5"/><rect x="1172" y="62" width="10" height="5"/>
<rect x="1189" y="33" width="30" height="5"/><rect x="1223" y="43" width="26" height="5"/><rect x="1252" y="53" width="28" height="5"/><rect x="1287" y="62" width="8" height="5"/><rect x="1299" y="62" width="10" height="5"/>
<rect x="1820" y="42" width="50" height="2"/><rect x="1872" y="46" width="30" height="2"/><rect x="1904" y="50" width="30" height="2"/><rect x="1936" y="52" width="30" height="2"/><rect x="1968" y="42" width="24" height="2"/><rect x="1994" y="38" width="30" height="2"/><rect x="2026" y="50" width="24" height="2"/>
<rect x="2072" y="33" width="30" height="5"/><rect x="2106" y="43" width="26" height="5"/><rect x="2135" y="53" width="28" height="5"/><rect x="2170" y="62" width="8" height="5"/><rect x="2182" y="62" width="10" height="5"/>
<rect x="2199" y="33" width="30" height="5"/><rect x="2233" y="43" width="26" height="5"/><rect x="2262" y="53" width="28" height="5"/><rect x="2297" y="62" width="8" height="5"/><rect x="2309" y="62" width="10" height="5"/>
<rect x="2326" y="33" width="30" height="5"/><rect x="2360" y="43" width="26" height="5"/><rect x="2389" y="53" width="28" height="5"/><rect x="2424" y="62" width="8" height="5"/><rect x="2436" y="62" width="10" height="5"/>
<rect x="2453" y="33" width="30" height="5"/><rect x="2487" y="43" width="26" height="5"/><rect x="2516" y="53" width="28" height="5"/><rect x="2551" y="62" width="8" height="5"/><rect x="2563" y="62" width="10" height="5"/>
</g>
</g>
<g transform="translate(0,663.6)">
<rect x="555" y="2" width="1491" height="68" fill="#38444b"/><rect x="2054" y="2" width="521" height="68" fill="#38444b"/>
<rect x="555" y="2" width="1491" height="28" fill="#6f7358"/><rect x="2062" y="2" width="513" height="28" fill="#6f7358"/><rect x="2054" y="2" width="8" height="28" fill="#565c8a"/>
<rect x="555" y="30" width="1491" height="40" fill="url(#wave)"/><rect x="2054" y="30" width="521" height="40" fill="url(#wave)"/>
<g fill="#4f5340"><rect x="582" y="4" width="2" height="24"/><rect x="620" y="4" width="2" height="24"/><rect x="665" y="4" width="2" height="24"/><rect x="680" y="4" width="2" height="24"/><rect x="700" y="4" width="2" height="24"/><rect x="746" y="4" width="2" height="24"/><rect x="780" y="4" width="2" height="24"/><rect x="840" y="4" width="2" height="24"/><rect x="860" y="4" width="2" height="24"/><rect x="900" y="4" width="2" height="24"/><rect x="934" y="4" width="2" height="24"/><rect x="990" y="4" width="2" height="24"/><rect x="1010" y="4" width="2" height="24"/><rect x="1040" y="4" width="3" height="24"/><rect x="1061" y="4" width="2" height="24"/><rect x="1100" y="4" width="2" height="24"/><rect x="1124" y="4" width="2" height="24"/><rect x="1165" y="4" width="2" height="24"/><rect x="1188" y="4" width="2" height="24"/><rect x="1230" y="4" width="2" height="24"/><rect x="1251" y="4" width="2" height="24"/><rect x="1290" y="4" width="2" height="24"/><rect x="1315" y="4" width="3" height="24"/><rect x="1355" y="4" width="2" height="24"/><rect x="1378" y="4" width="2" height="24"/><rect x="1420" y="4" width="2" height="24"/><rect x="1442" y="4" width="2" height="24"/><rect x="1482" y="4" width="2" height="24"/><rect x="1505" y="4" width="2" height="24"/><rect x="1548" y="4" width="2" height="24"/><rect x="1569" y="4" width="2" height="24"/><rect x="1610" y="4" width="2" height="24"/><rect x="1632" y="4" width="2" height="24"/><rect x="1673" y="4" width="2" height="24"/><rect x="1696" y="4" width="2" height="24"/><rect x="1738" y="4" width="2" height="24"/><rect x="1759" y="4" width="2" height="24"/><rect x="1800" y="4" width="2" height="24"/><rect x="1822" y="4" width="2" height="24"/><rect x="1864" y="4" width="2" height="24"/><rect x="1886" y="4" width="2" height="24"/><rect x="1928" y="4" width="2" height="24"/><rect x="1950" y="4" width="2" height="24"/><rect x="1990" y="4" width="2" height="24"/><rect x="2012" y="4" width="2" height="24"/><rect x="2133" y="4" width="2" height="24"/><rect x="2197" y="4" width="2" height="24"/><rect x="2260" y="4" width="2" height="24"/><rect x="2324" y="4" width="2" height="24"/><rect x="2387" y="4" width="2" height="24"/><rect x="2451" y="4" width="2" height="24"/><rect x="2514" y="4" width="2" height="24"/></g>
<use href="#aic" x="560" y="6"/><use href="#aic" x="575" y="6"/><use href="#aic" x="624" y="6"/><use href="#aic" x="686" y="6"/><use href="#aic" x="704" y="6"/><use href="#aic" x="750" y="6"/><use href="#aic" x="810" y="6"/><use href="#aic" x="828" y="6"/><use href="#aic" x="873" y="6"/><use href="#aic" x="937" y="6"/><use href="#aic" x="955" y="6"/><use href="#aic" x="1000" y="6"/><use href="#aic" x="1064" y="6"/><use href="#aic" x="1128" y="6"/><use href="#aic" x="1145" y="6"/><use href="#aic" x="1192" y="6"/><use href="#aic" x="1256" y="6"/><use href="#aic" x="1320" y="6"/><use href="#aic" x="1382" y="6"/><use href="#aic" x="1446" y="6"/><use href="#aic" x="1510" y="6"/><use href="#aic" x="1573" y="6"/><use href="#aic" x="1636" y="6"/><use href="#aic" x="1700" y="6"/><use href="#aic" x="1763" y="6"/><use href="#aic" x="1827" y="6"/><use href="#aic" x="1890" y="6"/><use href="#aic" x="1954" y="6"/><use href="#aic" x="2016" y="6"/><use href="#aic" x="2074" y="6"/><use href="#aic" x="2106" y="6"/><use href="#aic" x="2125" y="6"/><use href="#aic" x="2200" y="6"/><use href="#aic" x="2232" y="6"/><use href="#aic" x="2252" y="6"/><use href="#aic" x="2327" y="6"/><use href="#aic" x="2359" y="6"/><use href="#aic" x="2378" y="6"/><use href="#aic" x="2454" y="6"/><use href="#aic" x="2486" y="6"/><use href="#aic" x="2505" y="6"/>
<rect x="2576" y="2" width="252" height="68" fill="#3c4759"/><rect x="2576" y="30" width="252" height="40" fill="url(#wave)" opacity=".75"/><rect x="2576" y="2" width="252" height="28" fill="#5a5f8e"/><use href="#lic" x="2580" y="7"/><text x="2600" y="24">5_Girly_Guit..ultiplier #2</text><path d="M2576,33 Q2760,36 2822,68" stroke="#c3c6ee" stroke-width="2" fill="none"/>
</g>
<g transform="translate(0,735.8)">
<g fill="#6f7358"><rect x="815" y="2" width="24" height="28" rx="3"/><rect x="864" y="2" width="14" height="28" rx="3"/><rect x="893" y="2" width="40" height="28" rx="3"/><rect x="943" y="2" width="40" height="28" rx="3"/><rect x="993" y="2" width="10" height="28" rx="3"/><rect x="1020" y="2" width="18" height="28" rx="3"/><rect x="1060" y="2" width="44" height="28" rx="3"/><rect x="1113" y="2" width="26" height="28" rx="3"/><rect x="1148" y="2" width="46" height="28" rx="3"/><rect x="1203" y="2" width="14" height="28" rx="3"/><rect x="1248" y="2" width="24" height="28" rx="3"/><rect x="1276" y="2" width="36" height="28" rx="3"/><rect x="1569" y="2" width="28" height="28" rx="3"/><rect x="1611" y="2" width="28" height="28" rx="3"/><rect x="1652" y="2" width="40" height="28" rx="3"/><rect x="1698" y="2" width="38" height="28" rx="3"/><rect x="1757" y="2" width="14" height="28" rx="3"/><rect x="1785" y="2" width="28" height="28" rx="3"/><rect x="1830" y="2" width="28" height="28" rx="3"/><rect x="1867" y="2" width="28" height="28" rx="3"/><rect x="1905" y="2" width="40" height="28" rx="3"/><rect x="1958" y="2" width="30" height="28" rx="3"/><rect x="2013" y="2" width="34" height="28" rx="3"/><rect x="2328" y="2" width="24" height="28" rx="3"/><rect x="2380" y="2" width="14" height="28" rx="3"/><rect x="2408" y="2" width="38" height="28" rx="3"/><rect x="2455" y="2" width="22" height="28" rx="3"/><rect x="2493" y="2" width="28" height="28" rx="3"/><rect x="2538" y="2" width="38" height="28" rx="3"/></g>
<g fill="url(#wave)"><rect x="815" y="30" width="24" height="40"/><rect x="864" y="30" width="14" height="40"/><rect x="893" y="30" width="40" height="40"/><rect x="943" y="30" width="40" height="40"/><rect x="993" y="30" width="10" height="40"/><rect x="1020" y="30" width="18" height="40"/><rect x="1060" y="30" width="44" height="40"/><rect x="1113" y="30" width="26" height="40"/><rect x="1148" y="30" width="46" height="40"/><rect x="1203" y="30" width="14" height="40"/><rect x="1248" y="30" width="24" height="40"/><rect x="1276" y="30" width="36" height="40"/><rect x="1569" y="30" width="28" height="40"/><rect x="1611" y="30" width="28" height="40"/><rect x="1652" y="30" width="40" height="40"/><rect x="1698" y="30" width="38" height="40"/><rect x="1757" y="30" width="14" height="40"/><rect x="1785" y="30" width="28" height="40"/><rect x="1830" y="30" width="28" height="40"/><rect x="1867" y="30" width="28" height="40"/><rect x="1905" y="30" width="40" height="40"/><rect x="1958" y="30" width="30" height="40"/><rect x="2013" y="30" width="34" height="40"/><rect x="2328" y="30" width="24" height="40"/><rect x="2380" y="30" width="14" height="40"/><rect x="2408" y="30" width="38" height="40"/><rect x="2455" y="30" width="22" height="40"/><rect x="2493" y="30" width="28" height="40"/><rect x="2538" y="30" width="38" height="40"/></g>
<use href="#aic" x="818" y="6"/><use href="#aic" x="897" y="6"/><use href="#aic" x="947" y="6"/><use href="#aic" x="1064" y="6"/><use href="#aic" x="1152" y="6"/><use href="#aic" x="1280" y="6"/><use href="#aic" x="1573" y="6"/><use href="#aic" x="1656" y="6"/><use href="#aic" x="1702" y="6"/><use href="#aic" x="1909" y="6"/><use href="#aic" x="2017" y="6"/><use href="#aic" x="2332" y="6"/><use href="#aic" x="2412" y="6"/><use href="#aic" x="2542" y="6"/>
</g>
<g transform="translate(0,808)">
<rect x="555" y="30" width="757" height="40" fill="#2c3840"/><rect x="1817" y="30" width="506" height="40" fill="#2c3840"/>
<g fill="#555b8a"><rect x="555" y="2" width="250" height="28" rx="3"/><rect x="807" y="2" width="505" height="28" rx="3"/><rect x="1817" y="2" width="506" height="28" rx="3"/></g>
<use href="#lic" x="557" y="7"/><text x="579" y="24">Gross Beat - Mix level</text><use href="#lic" x="809" y="7"/><text x="831" y="24">Gross Beat - Mix level</text><use href="#lic" x="1819" y="7"/><text x="1841" y="24">Gross Beat - Mix level</text>
<path d="M555,68 H1030 V32 H1046 V68 H1312 M1817,68 H2040 V32 H2054 V68 H2323" stroke="#c7cbee" stroke-width="2" fill="none"/>
</g>
<g transform="translate(0,880.2)" >
<g fill="#5d7a5e"><rect x="860" y="2" width="9" height="28"/><rect x="987" y="2" width="9" height="28"/><rect x="1112" y="2" width="9" height="28"/><rect x="1240" y="2" width="9" height="28"/><rect x="2377" y="2" width="9" height="28"/><rect x="2504" y="2" width="9" height="28"/></g>
<g fill="#b8ccb4"><rect x="860" y="38" width="9" height="30"/><rect x="987" y="38" width="9" height="30"/><rect x="1112" y="38" width="9" height="30"/><rect x="1240" y="38" width="9" height="30"/><rect x="2377" y="38" width="9" height="30"/><rect x="2504" y="38" width="9" height="30"/></g>
</g>
<g transform="translate(0,952.4)">
<rect x="555" y="30" width="757" height="40" fill="#395451"/><rect x="1817" y="30" width="506" height="40" fill="#395451"/>
<g fill="#4b8b6d"><rect x="555" y="2" width="250" height="28" rx="3"/><rect x="807" y="2" width="505" height="28" rx="3"/><rect x="1817" y="2" width="245" height="28" rx="3"/><rect x="2076" y="2" width="247" height="28" rx="3"/></g>
<use href="#lic" x="557" y="7"/><text x="579" y="24">R_Ambience..Mute / solo</text><use href="#lic" x="809" y="7"/><text x="831" y="24">R_Ambience - Mute / solo</text><use href="#lic" x="1819" y="7"/><text x="1841" y="24">R_Ambience..ute / solo</text><use href="#lic" x="2078" y="7"/><text x="2100" y="24">R_Ambience..ute / solo</text>
<rect x="1036" y="32" width="22" height="38" fill="#27333a"/><rect x="2050" y="32" width="12" height="38" fill="#27333a"/>
<path d="M555,32 H1036 V70 H1058 V32 H1312 M1817,32 H2050 V70 H2062 V32 H2323" stroke="#bfe6d2" stroke-width="2" fill="none"/>
</g>
<g transform="translate(0,1024.6)">
<rect x="765" y="30" width="132" height="40" fill="#2f3840"/><rect x="1056" y="30" width="92" height="40" fill="#3d4556"/><rect x="1272" y="30" width="40" height="40" fill="#262f36"/><rect x="1776" y="30" width="41" height="40" fill="#262f36"/><rect x="2029" y="30" width="131" height="40" fill="#2f3840"/>
<g fill="#6e4f5a"><rect x="765" y="2" width="132" height="28" rx="3"/><rect x="1272" y="2" width="40" height="28" rx="3"/><rect x="1776" y="2" width="41" height="28" rx="3"/><rect x="2029" y="2" width="131" height="28" rx="3"/></g>
<rect x="1056" y="2" width="92" height="28" rx="3" fill="#565c8a"/>
<use href="#aic" x="770" y="6"/><text x="791" y="24">KRNE..ong</text><use href="#lic" x="1058" y="7"/><text x="1082" y="24">KR..er</text><use href="#aic" x="1277" y="6"/><use href="#aic" x="1780" y="6"/><use href="#aic" x="2034" y="6"/><text x="2055" y="24">KRNE..ong</text>
<g fill="#d6b7c4"><path d="M786,50 L792,31 L796,45 L806,49 L840,49 L840,52 L806,52 L796,56 L792,69 Z"/><path d="M1057,31 L1062,46 L1070,49 L1146,49 L1146,52 L1070,52 L1062,55 L1057,69 Z"/><path d="M1312,31 L1306,46 L1298,49 L1272,49 L1272,52 L1298,52 L1306,55 L1312,69 Z"/><path d="M1817,31 L1811,46 L1803,49 L1778,49 L1778,52 L1803,52 L1811,55 L1817,69 Z"/><path d="M2050,50 L2056,31 L2060,45 L2070,49 L2104,49 L2104,52 L2070,52 L2060,56 L2056,69 Z"/></g>
</g>
<g transform="translate(0,1096.8)">
<g fill="#6f7358"><rect x="1058" y="2" width="44" height="28" rx="3"/><rect x="2070" y="2" width="44" height="28" rx="3"/></g>
<rect x="1058" y="30" width="44" height="40" fill="#262f36"/><rect x="2070" y="30" width="44" height="40" fill="#262f36"/>
<use href="#aic" x="1063" y="6"/><use href="#aic" x="2075" y="6"/>
<g fill="#c7cab0"><path d="M1058,31 L1064,35 L1068,44 L1076,48 L1100,49 L1100,51 L1076,52 L1068,58 L1064,66 L1058,69 Z"/><path d="M2070,31 L2076,35 L2080,44 L2088,48 L2112,49 L2112,51 L2088,52 L2080,58 L2076,66 L2070,69 Z"/></g>
</g>
</g>
</svg>
</body></html>
